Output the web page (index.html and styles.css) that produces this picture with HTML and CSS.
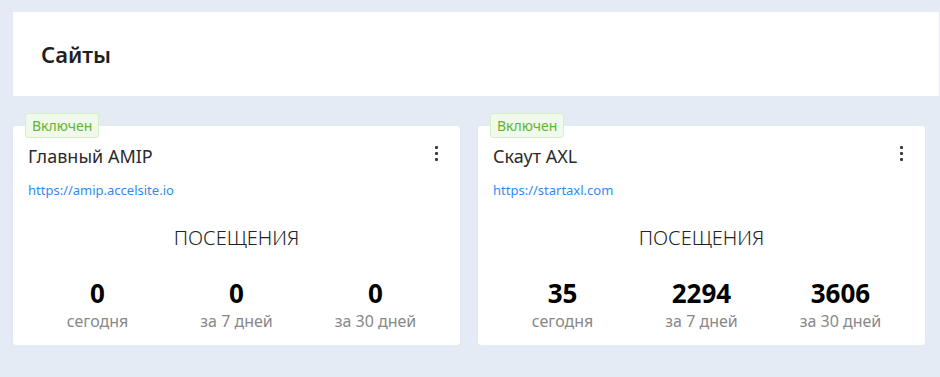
FILE: index.html
```html
<!doctype html>
<html lang="ru">
    <head>
        <meta charset="utf-8">
        <title>Сайты</title>
        <link rel="stylesheet" href="styles.css">
    </head>
    <body>
        <div class="page">
            <div class="page__header">
                <h1 class="page__title">Сайты</h1>
            </div>
            <div class="sites">
                <div class="site">
                    <span class="site__tag">Включен</span>
                    <div class="site__top">
                        <div class="site__name">Главный AMIP</div>
                        <div class="site__menu"><span></span><span></span><span></span></div>
                    </div>
                    <a class="site__link" href="#">https://amip.accelsite.io</a>
                    <div class="site__caption">ПОСЕЩЕНИЯ</div>
                    <ul class="site__stats">
                        <li><b>0</b><span>сегодня</span></li>
                        <li><b>0</b><span>за 7 дней</span></li>
                        <li><b>0</b><span>за 30 дней</span></li>
                    </ul>
                </div>
                <div class="site">
                    <span class="site__tag">Включен</span>
                    <div class="site__top">
                        <div class="site__name">Скаут AXL</div>
                        <div class="site__menu"><span></span><span></span><span></span></div>
                    </div>
                    <a class="site__link" href="#">https://startaxl.com</a>
                    <div class="site__caption">ПОСЕЩЕНИЯ</div>
                    <ul class="site__stats">
                        <li><b>35</b><span>сегодня</span></li>
                        <li><b>2294</b><span>за 7 дней</span></li>
                        <li><b>3606</b><span>за 30 дней</span></li>
                    </ul>
                </div>
            </div>
        </div>
    </body>
</html>
```

FILE: styles.css
```css
body {
    background: #e4ebf5;
    font-family: "Noto Sans", "Open Sans", sans-serif;
    margin: 0;
}

.page {
    padding: 12px 1px 0 13px;
}

.page__header {
    align-items: center;
    background: #fff;
    display: flex;
    height: 84px;
    padding-left: 28px;
}

.page__title {
    color: #1f1f1f;
    font-size: 22px;
    font-weight: 600;
    margin: 0;
}

.sites {
    display: grid;
    gap: 18px;
    grid-template-columns: 447px 447px;
    margin-top: 30px;
}

.site {
    background: #fff;
    border-radius: 3px;
    box-shadow: 0 1px 3px rgba(0, 0, 0, 0.04);
    padding: 16px 15px 13px;
    position: relative;
}

.site__tag {
    background: #f0f9eb;
    border: 1px solid #d6f0c6;
    border-radius: 3px;
    box-sizing: border-box;
    color: #5fb533;
    font-size: 14px;
    height: 25px;
    left: 12px;
    line-height: 23px;
    padding: 0 6px;
    position: absolute;
    top: -13px;
}

.site__top {
    align-items: center;
    display: flex;
    justify-content: space-between;
}

.site__name {
    color: #2b2b2b;
    font-size: 18px;
    line-height: 28px;
}

.site__menu {
    align-items: center;
    display: flex;
    flex-direction: column;
    gap: 3px;
    margin-top: -5px;
    width: 18px;
}

.site__menu span {
    background: #3a3a3a;
    border-radius: 1px;
    height: 3px;
    width: 3px;
}

.site__link {
    color: #2d8cf0;
    display: inline-block;
    font-size: 13px;
    line-height: 20px;
    margin-top: 10px;
    text-decoration: none;
}

.site__caption {
    color: #222;
    font-size: 20px;
    font-weight: 300;
    line-height: 28px;
    margin-top: 24px;
    text-align: center;
}

.site__stats {
    display: flex;
    justify-content: center;
    list-style: none;
    margin: 26px 0 0;
    padding: 0;
}

.site__stats li {
    display: flex;
    flex-direction: column;
    text-align: center;
    width: 140px;
}

.site__stats b {
    color: #000;
    font-size: 26px;
    line-height: 31px;
}

.site__stats span {
    color: #888;
    font-size: 16px;
    line-height: 22px;
    margin-top: 1px;
}
```
